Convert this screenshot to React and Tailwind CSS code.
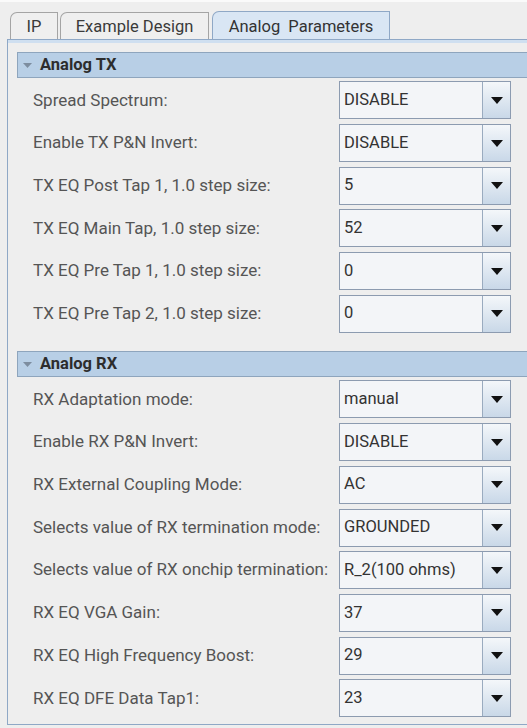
import React from 'react';

const txRows = [
  ['Spread Spectrum:', 'DISABLE'],
  ['Enable TX P&N Invert:', 'DISABLE'],
  ['TX EQ Post Tap 1, 1.0 step size:', '5'],
  ['TX EQ Main Tap, 1.0 step size:', '52'],
  ['TX EQ Pre Tap 1, 1.0 step size:', '0'],
  ['TX EQ Pre Tap 2, 1.0 step size:', '0'],
];

const rxRows = [
  ['RX Adaptation mode:', 'manual'],
  ['Enable RX P&N Invert:', 'DISABLE'],
  ['RX External Coupling Mode:', 'AC'],
  ['Selects value of RX termination mode:', 'GROUNDED'],
  ['Selects value of RX onchip termination:', 'R_2(100 ohms)'],
  ['RX EQ VGA Gain:', '37'],
  ['RX EQ High Frequency Boost:', '29'],
  ['RX EQ DFE Data Tap1:', '23'],
];

function Combo({ value }) {
  return (
    <div className="flex h-[38px] w-[172px] border border-[#8c9bb0] bg-[#f3f5f8]">
      <div className="flex flex-1 items-center pl-[4px] text-[16.5px] text-[#333]">{value}</div>
      <div className="flex w-[28px] items-center justify-center border-l border-[#9aabbf] bg-gradient-to-b from-[#f4f7fa] to-[#c9d8e8]">
        <svg width="12" height="7" viewBox="0 0 12 7">
          <path d="M0 0h12L6 7z" fill="#111" />
        </svg>
      </div>
    </div>
  );
}

function Section({ title, rows, first }) {
  return (
    <div className={first ? '' : 'mt-[16px]'}>
      <div className="flex h-[26px] items-center border border-r-0 border-[#8ea5bd] bg-[#b8cfe6]">
        <svg className="ml-[5px] mr-[8px]" width="9" height="5" viewBox="0 0 9 5">
          <path d="M0 0h9L4.5 5z" fill="#7d8d9f" />
        </svg>
        <span className="text-[16.5px] font-bold text-[#2d2d2d]">{title}</span>
      </div>
      <div className={first ? 'pt-[1px]' : 'pt-[1px]'}>
        {rows.map(([label, value]) => (
          <div key={label} className="flex h-[42.7px] items-center">
            <div className="w-[322px] whitespace-nowrap pl-[16px] text-[17px] text-[#555]">{label}</div>
            <Combo value={value} />
          </div>
        ))}
      </div>
    </div>
  );
}

function Tab({ label, active, className }) {
  return (
    <div
      className={
        'flex items-center justify-center border border-b-0 rounded-tl-[7px] pt-[3px] text-[16.5px] ' +
        (active
          ? 'h-[28px] border-[#8fa8c6] bg-[#d9e6f4] text-[#333] '
          : 'h-[27px] border-[#a4a4a4] bg-[#efefef] text-[#3a3a3a] ') +
        className
      }
    >
      {label}
    </div>
  );
}

export default function App() {
  return (
    <div
      className="h-[728px] w-[527px] overflow-hidden bg-[#eeeeee]"
      style={{ fontFamily: 'Roboto, "Liberation Sans", sans-serif' }}
    >
      <div className="h-[2px] bg-[#fafafa]" />
      <div className="flex h-[37px] items-end pl-[10px]">
        <Tab label="IP" className="w-[48px]" />
        <Tab label="Example Design" className="ml-[2px] w-[149px]" />
        <Tab label={'Analog\u00a0 Parameters'} active className="ml-[3px] w-[178px]" />
      </div>
      <div className="ml-[7px] h-[686px] border border-r-0 border-[#8fa8c6] bg-[#eeeeee]">
        <div className="h-[3px] bg-[#cfdff0]" />
        <div className="pl-[9px] pt-[9px]">
          <Section title="Analog TX" rows={txRows} first />
          <Section title="Analog RX" rows={rxRows} />
        </div>
      </div>
    </div>
  );
}
